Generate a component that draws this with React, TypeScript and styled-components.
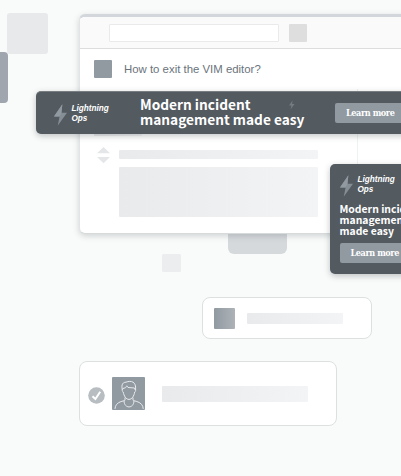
import React from "react";
import styled, { createGlobalStyle } from "styled-components";

const GlobalStyle = createGlobalStyle`
  * { box-sizing: border-box; }
  html, body { margin: 0; overflow: hidden; background: #f9fbfa; }
`;

const Scene = styled.main`
  position: relative;
  width: 401px;
  height: 476px;
  padding-top: 14px;
  overflow: hidden;
  background: #f9fbfa;
  font-family: "Liberation Sans", Arial, sans-serif;
`;

const Decoration = styled.div<{ $x: number; $y: number; $w: number; $h: number; $r: number; $fill: string }>`
  position: absolute;
  left: ${(p) => p.$x}px;
  top: ${(p) => p.$y}px;
  width: ${(p) => p.$w}px;
  height: ${(p) => p.$h}px;
  border-radius: ${(p) => p.$r}px;
  background: ${(p) => p.$fill};
`;

const BrowserWindow = styled.section`
  position: relative;
  width: 420px;
  height: 220px;
  margin-left: 79px;
  border-top: 3px solid #d3d7dc;
  border-left: 1px solid #e2e5e6;
  border-bottom: 1px solid #d6dadb;
  border-radius: 6px;
  background: #fff;
  box-shadow: 0 2px 6px rgba(60, 70, 75, 0.22);
`;

const Toolbar = styled.header`
  display: flex;
  align-items: center;
  gap: 10px;
  height: 32px;
  padding: 0 0 0 28.5px;
  border-bottom: 1px solid #dcdddd;
  border-radius: 5px 0 0 0;
  background: #fafafa;
`;

const AddressField = styled.div`
  width: 170px;
  height: 18px;
  border: 1px solid #eaeaea;
  border-radius: 1px;
  background: #fff;
`;

const Tile = styled.div<{ $size: number; $fill: string }>`
  flex: none;
  width: ${(p) => p.$size}px;
  height: ${(p) => p.$size}px;
  border-radius: 1px;
  background: ${(p) => p.$fill};
`;

const Question = styled.div`
  display: flex;
  align-items: center;
  gap: 12px;
  height: 40px;
  padding-left: 13.5px;
  color: #6a737c;
  font-size: 11.4px;
  white-space: nowrap;
`;

const Body = styled.div`
  display: grid;
  grid-template-columns: 277px 1fr;
  height: 144px;
`;

const Sidebar = styled.aside`
  border-left: 1px solid #eff2f2;
`;

const Post = styled.article`
  padding-top: 38px;
`;

const PostMeta = styled.div`
  height: 20px;
  padding: 0 0 0 14px;
`;

const PostContent = styled.div`
  display: flex;
  gap: 9px;
  padding-left: 16.5px;
`;

const Votes = styled.svg`
  display: block;
  flex: none;
  width: 13px;
  height: 17px;
`;

const Lines = styled.div`
  display: flex;
  flex-direction: column;
  gap: 8px;
  padding-top: 3px;
`;

const Placeholder = styled.div<{ $w: number; $h: number }>`
  flex: none;
  width: ${(p) => p.$w}px;
  height: ${(p) => p.$h}px;
  border-radius: 1px;
  background: linear-gradient(90deg, #e9eaec, #f3f4f5);
`;

const Card = styled.section<{ $w: number; $h: number; $left: number; $top: number }>`
  display: flex;
  align-items: center;
  width: ${(p) => p.$w}px;
  height: ${(p) => p.$h}px;
  margin: ${(p) => p.$top}px 0 0 ${(p) => p.$left}px;
  border: 1px solid #dce1e0;
  border-radius: 8px;
  background: #fff;
`;

const CompactCard = styled(Card)`
  gap: 11.5px;
  padding-left: 11px;
`;

const ProfileCard = styled(Card)`
  padding-left: 8px;
`;

const Check = styled.svg`
  width: 17px;
  height: 17px;
  margin: 4px 7px 0 0;
`;

const Portrait = styled.svg`
  width: 33px;
  height: 33px;
  margin-right: 16.5px;
`;

const Ad = styled.div`
  position: absolute;
  background: #535a60;
  color: #fff;
  box-shadow: 0 2px 6px rgba(40, 48, 54, 0.28);
  white-space: nowrap;
`;

const Leaderboard = styled(Ad)`
  display: flex;
  align-items: center;
  left: 36px;
  top: 91px;
  width: 400px;
  height: 43px;
  padding-left: 17.5px;
  border-top: 1px solid #777d82;
  border-radius: 5px;
`;

const SideAd = styled(Ad)`
  left: 330px;
  top: 164px;
  width: 110px;
  height: 110px;
  padding: 7.5px 0 0 9.5px;
  border-radius: 5px;
`;

const Brand = styled.div`
  display: flex;
  align-items: center;
  gap: 4px;
`;

const BrandName = styled.div`
  width: 40px;
  padding-top: 2px;
  font: italic bold 8.2px/10px "Liberation Sans", Arial, sans-serif;
`;

const BrandBolt = styled.svg`
  width: 13px;
  height: 22px;
  margin: 3px 1px 0 0;
`;

const Headline = styled.div<{ $size: number; $line: number }>`
  font: bold ${(p) => p.$size}px/${(p) => p.$line}px "Noto Sans CJK SC", "Noto Sans", sans-serif;
`;

const LeaderHeadline = styled(Headline)`
  width: 166px;
  margin-left: 28.5px;
  padding-bottom: 3px;
`;

const SideHeadline = styled(Headline)`
  margin-top: 6px;
`;

const AdButton = styled.div`
  width: 74px;
  height: 20px;
  padding-left: 11px;
  border-radius: 2px;
  background: #9199a1;
  font: bold 9px/20px "DejaVu Serif Condensed", "DejaVu Serif", serif;
  letter-spacing: -0.4px;
`;

const LeaderButton = styled(AdButton)`
  margin-left: 29px;
`;

const SideButton = styled(AdButton)`
  margin-top: 6px;
`;

const Spark = styled.svg`
  position: absolute;
  left: 253px;
  top: 8px;
  width: 5.5px;
  height: 10px;
`;

const BOLT = "M9 0 L0 13 H6 L4 23 L14 9 H8 Z";

const Logo = () => (
  <Brand>
    <BrandBolt viewBox="0 0 14 23">
      <path d={BOLT} fill="#858d95" />
      <path d="M9 0 L0 13 H6 L8 9 Z" fill="#9199a1" />
    </BrandBolt>
    <BrandName>Lightning<br />Ops</BrandName>
  </Brand>
);

export default function App() {
  return (
    <>
      <GlobalStyle />
      <Scene>
        <Decoration $x={6.5} $y={12.5} $w={41} $h={41} $r={3} $fill="#e7e9ea" />
        <Decoration $x={-12} $y={52} $w={20} $h={51} $r={4} $fill="#9fa6ad" />
        <Decoration $x={228} $y={224} $w={59} $h={30} $r={6} $fill="#d5d9dc" />
        <Decoration $x={162} $y={254} $w={18.5} $h={18} $r={1.5} $fill="#ebedee" />

        <BrowserWindow>
          <Toolbar>
            <AddressField />
            <Tile $size={18} $fill="#dedede" />
          </Toolbar>
          <Question>
            <Tile $size={18.5} $fill="#9199a1" />
            <span>How to exit the VIM editor?</span>
          </Question>
          <Body>
            <Post>
              <PostMeta>
                <Placeholder $w={48} $h={8.5} />
              </PostMeta>
              <PostContent>
                <Votes viewBox="0 0 13 17">
                  <path d="M0 6.3 L6.5 0 L13 6.3 Z M0 10 H13 L6.5 16.3 Z" fill="#e4e6e8" />
                </Votes>
                <Lines>
                  <Placeholder $w={199.5} $h={9} />
                  <Placeholder $w={199.5} $h={50} />
                </Lines>
              </PostContent>
            </Post>
            <Sidebar />
          </Body>
        </BrowserWindow>

        <CompactCard $w={170} $h={42} $left={202} $top={63}>
          <Tile $size={21} $fill="linear-gradient(90deg, #9199a1, #adb3b8)" />
          <Placeholder $w={96.5} $h={11} />
        </CompactCard>

        <ProfileCard $w={258} $h={65} $left={79} $top={22}>
          <Check viewBox="0 0 17 17">
            <circle cx="8.5" cy="8.5" r="8.3" fill="#b7bdc1" />
            <path d="M4.5 9.2 L7.4 12 L12.2 4.8" fill="none" stroke="#fff" strokeWidth="2" />
          </Check>
          <Portrait viewBox="0 0 33 33">
            <rect width="33" height="33" rx="1" fill="#9199a1" />
            <g fill="none" stroke="#e9ebed" strokeWidth="1" strokeLinecap="round" strokeLinejoin="round">
              <path d="M10.3 12.5 C8.8 7 11.5 5.1 14 5.2 C19 3.3 24.5 4.4 23.6 12.5" />
              <path d="M11 11.5 L13.2 10.8 C14 10.8 14.2 9.5 14.8 8.8 L16 10.5 L22.6 11 L23 12.5" />
              <path d="M10.3 12.5 C10 14 10.5 14.5 11.2 15 C12 19 14 22.4 17 22.4 C20 22.4 22 19 22.7 15 C23.5 14.5 23.9 14 23.6 12.5" />
              <path d="M13 21 V23.2 C13 24.2 3.3 24 3 31.5 M21 21 V23.2 C21 24.2 31 24 31.2 31.5 M12 24 C12 32 22 32 22 24" />
            </g>
          </Portrait>
          <Placeholder $w={146.5} $h={16} />
        </ProfileCard>

        <Leaderboard>
          <Logo />
          <LeaderHeadline $size={13.7} $line={15}>Modern incident<br />management made easy</LeaderHeadline>
          <LeaderButton>Learn more</LeaderButton>
          <Spark viewBox="0 0 14 23">
            <path d={BOLT} fill="#747b82" />
          </Spark>
        </Leaderboard>

        <SideAd>
          <Logo />
          <SideHeadline $size={10.4} $line={11.4}>Modern incident<br />management<br />made easy</SideHeadline>
          <SideButton>Learn more</SideButton>
        </SideAd>
      </Scene>
    </>
  );
}
